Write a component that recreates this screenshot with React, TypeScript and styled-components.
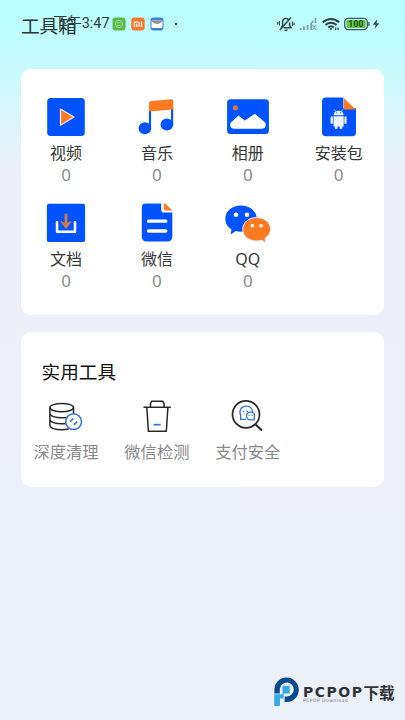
import React from 'react';
import styled, { createGlobalStyle } from 'styled-components';

const Global = createGlobalStyle`
  * { box-sizing: border-box; }
  body { margin: 0; font-family: "Noto Sans", "Noto Sans CJK SC", sans-serif; }
`;

const BLUE = '#0053ff';
const ORANGE = '#fc7a22';

const Screen = styled.main`
  position: relative;
  display: flex;
  flex-direction: column;
  width: 405px;
  height: 720px;
  overflow: hidden;
  background: linear-gradient(180deg, #b9fffe 0, #bbfefd 24px, #c9fbfc 66px, #eceff8 168px, #ecf0f8 100%);
`;

const Header = styled.header`
  position: relative;
  height: 69px;
  padding: 12px 0 0 21px;
`;

const PageTitle = styled.h1`
  margin: 0;
  font-size: 18.6px;
  line-height: 28px;
  font-weight: 400;
  color: #2a3536;
`;

const StatusBar = styled.div`
  position: absolute;
  left: 53px;
  right: 25px;
  top: 14px;
  height: 20px;
  display: flex;
  align-items: center;
  justify-content: space-between;
`;

const StatusGroup = styled.div<{ $gap: number }>`
  display: flex;
  align-items: center;
  gap: ${(p) => p.$gap}px;
`;

const Clock = styled.span`
  width: 60px;
  margin-right: -6px;
  font-family: "Roboto", "Noto Sans CJK SC", sans-serif;
  font-size: 14.4px;
  line-height: 20px;
  color: #2b3d3e;
  white-space: nowrap;
`;

const Dot = styled.i`
  width: 2px;
  height: 2px;
  margin-left: 6px;
  background: #344;
`;

const Card = styled.section<{ $height: number }>`
  width: 363.5px;
  height: ${(p) => p.$height}px;
  margin: 0 0 16.5px 20.6px;
  background: #fff;
  border-radius: 10px;
`;

const Grid = styled.div<{ $top?: number }>`
  display: grid;
  grid-template-columns: repeat(4, 1fr);
  grid-auto-rows: 106.5px;
  padding-top: ${(p) => p.$top ?? 0}px;
`;

const Cell = styled.div`
  display: flex;
  flex-direction: column;
  align-items: center;
  svg { display: block; flex: none; }
`;

const Label = styled.span<{ $muted?: boolean }>`
  margin-top: 2px;
  font-size: ${(p) => (p.$muted ? 16.3 : 16)}px;
  line-height: 22px;
  color: ${(p) => (p.$muted ? '#8a8a8a' : '#383838')};
  white-space: nowrap;
`;

const Count = styled.span`
  font-size: 17px;
  line-height: 22px;
  color: #8a8a8a;
`;

const SectionTitle = styled.h2`
  margin: 0;
  padding: 26px 0 0 21px;
  font-size: 18.6px;
  line-height: 28px;
  font-weight: 400;
  color: #111;
`;

const Watermark = styled.aside`
  position: absolute;
  left: 273px;
  top: 676px;
  display: flex;
  gap: 3px;
`;

const Brand = styled.div`
  display: flex;
  flex-direction: column;
  padding-top: 8px;
`;

const BrandName = styled.div`
  display: flex;
  align-items: center;
  height: 16px;
  color: #303236;
  font: 700 14px/16px "DejaVu Sans", sans-serif;
  letter-spacing: 1.5px;
  white-space: nowrap;
`;

const BrandCjk = styled.span`
  font: 700 15.6px/16px "Noto Sans CJK SC", sans-serif;
  letter-spacing: 0;
`;

const BrandSub = styled.span`
  margin-top: -2px;
  font: 400 4.6px/6px "DejaVu Sans", sans-serif;
  letter-spacing: 0.4px;
  color: #6b7078;
  white-space: nowrap;
`;

const Icon = ({ children }: { children: React.ReactNode }) => (
  <svg width="48" height="46" viewBox="0 0 48 46" fill="none">{children}</svg>
);

const VideoIcon = () => (
  <Icon>
    <rect x="5.2" y="4" width="37.6" height="38" rx="3.5" fill={BLUE} />
    <path d="M18.5 15v16.2L32 23.1z" fill={ORANGE} stroke="#e9ecff" strokeWidth="1.2" strokeLinejoin="round" />
  </Icon>
);

const MusicIcon = () => (
  <Icon>
    <ellipse cx="11.9" cy="34.2" rx="6.3" ry="6" fill={BLUE} />
    <ellipse cx="33.9" cy="30.6" rx="6.3" ry="6" fill={BLUE} />
    <path d="M17 17v17M39.1 14v17" stroke={BLUE} strokeWidth="2.2" />
    <path d="M16 17.6V9.100Q16 7.100 18.100 6.900L38.200 5.200Q40.300 5.100 40.300 7v8.600z" fill={ORANGE} />
  </Icon>
);

const AlbumIcon = () => (
  <Icon>
    <rect x="3.1" y="5.2" width="41.8" height="34.9" rx="3.5" fill={BLUE} />
    <circle cx="11.4" cy="13.8" r="2.6" fill="#d8783f" />
    <path d="M6.8 28.9l7.8-6.800 6.200 5 10.100-6.800 10.200 8.600v2.700q0 2.600-2.600 2.600H9.400q-2.600 0-2.600-2.600z" fill="#fff" stroke="#fff" strokeLinejoin="round" />
  </Icon>
);

const PackageIcon = () => (
  <Icon>
    <path d="M11 3.500h17.300v10.800H41v24a4 4 0 0 1-4 4H11a4 4 0 0 1-4-4V7.500a4 4 0 0 1 4-4z" fill={BLUE} />
    <path d="M28.600 3.700l12 11.900H30.500q-1.900 0-1.900-1.900z" fill={ORANGE} />
    <g fill="#eef4ff">
      <path d="M18.600 21.200q.2-4.500 5-4.500t5 4.500zM18.500 22.200h10.200v10.300H18.500z" />
      <rect x="15.600" y="22.300" width="2.200" height="7.800" rx="1.100" />
      <rect x="29.400" y="22.300" width="2.200" height="7.800" rx="1.100" />
      <rect x="19.900" y="30" width="2.600" height="5" rx="1" />
      <rect x="24.700" y="30" width="2.600" height="5" rx="1" />
    </g>
    <path d="M19.300 15.500l1.500 2m7-2l-1.500 2" stroke="#eef4ff" strokeWidth=".8" />
    <path d="M21.200 18.900h1m3 0h1" stroke={BLUE} />
  </Icon>
);

const DocumentIcon = () => (
  <Icon>
    <rect x="4.900" y="3.800" width="38.200" height="38.300" rx="2.200" fill={BLUE} />
    <path d="M15 22.300v9.500h18v-9.500" stroke="#fff" strokeWidth="2.500" strokeLinejoin="round" strokeLinecap="round" />
    <path d="M24 13.500v12" stroke="#d17b46" strokeWidth="2.800" />
    <path d="M18.900 21.600l5.100 6.800 5.100-6.800-5.100 2.200z" fill="#d17b46" stroke="#d17b46" strokeLinejoin="round" />
  </Icon>
);

const FileIcon = () => (
  <Icon>
    <path d="M12.500 3.600h15.700v6.200q0 2.800 2.800 2.800h8.300v24.500a4.500 4.500 0 0 1-4.500 4.500H13.300a4.500 4.500 0 0 1-4.500-4.500V7.600q0-4 3.700-4z" fill={BLUE} />
    <path d="M30.800 3.700h1.600l7 6.800H32.500q-1.700 0-1.700-1.700z" fill={ORANGE} />
    <path d="M15.500 21.200h17.300M15.500 31h17.300" stroke="#fff" strokeWidth="3.300" strokeLinecap="round" />
  </Icon>
);

const ChatIcon = () => (
  <Icon>
    <path d="M17 5.400C8 5.400 1.300 10.900 1.300 18.700c0 4.600 2.300 8.200 6.200 10.600l-.8 5.100 5-3.300c1.600.4 3.300.6 5.300.6 9 0 15.700-5.500 15.700-13S26 5.400 17 5.400z" fill={BLUE} />
    <path d="M32.600 17.600c-8 0-13.900 5-13.900 11.700S24.600 41 32.600 41c1.800 0 3.600-.2 5.100-.7l4.200 2.500-.9-4.500c3.500-2.100 5.600-5.300 5.600-9 0-6.700-6-11.700-14-11.700z" fill={ORANGE} stroke="#eef" strokeWidth="1" />
    <g fill="#fff"><circle cx="12" cy="14.800" r="2.300" /><circle cx="23" cy="14.800" r="2.300" /><circle cx="28.300" cy="25.700" r="1.800" /><circle cx="37.100" cy="25.700" r="1.800" /></g>
  </Icon>
);

const ToolIcon = ({ children }: { children: React.ReactNode }) => (
  <svg width="48" height="40" viewBox="0 0 48 40" fill="none" stroke="#282828" strokeWidth="1.500">{children}</svg>
);

const CleanIcon = () => (
  <ToolIcon>
    <ellipse cx="19.700" cy="8.600" rx="11.800" ry="4.200" />
    <path d="M7.900 8.600v18c0 2.400 5.300 4.200 11.800 4.200 3 0 5-.3 7-.8M31.500 8.600v7.400M7.900 14.600c0 2.400 5.300 4.200 11.800 4.200 4 0 8-.4 10.500-1.700M7.900 20.600c0 2.400 5.300 4.200 11.800 4.200h4" />
    <g stroke="#3472df"><circle cx="31.600" cy="22.700" r="7.900" fill="#fff" /><path d="M28.100 22.700l3.200-3.200m.6 6.400l3.200-3.200" strokeWidth="1.700" /></g>
  </ToolIcon>
);

const TrashIcon = () => (
  <ToolIcon>
    <path d="M10.400 8.200h27.400M17.500 8V4.500l1.200-2.200h11l1.400 2.200V8M13.800 8.500l1.600 23.700h17.900l1.600-23.700" />
    <path d="M20.500 25.700h7.200" stroke="#3472df" strokeWidth="1.700" />
  </ToolIcon>
);

const SecureIcon = () => (
  <ToolIcon>
    <circle cx="22" cy="15.400" r="13.500" strokeWidth="1.700" />
    <path d="M31.600 25.500l6.400 5.900" strokeWidth="2" />
    <g stroke="#3472df" strokeWidth="1.300">
      <path d="M22 20.400h-5.300v-4c-2.200-4.600.6-9.300 5.400-9.300 3.700 0 6.300 2.400 6.600 6" />
      <path d="M30.200 20.900h-3.500c-5.600 0-5.500-7.800.1-7.800 3 0 4.400 2.400 3.400 4.700z" />
      <path d="M18.700 12.500h1.400m2.400 0h1.400M24.600 16.300h1.100m1.900 0h1.100" />
    </g>
  </ToolIcon>
);

const ShieldAppIcon = () => (
  <svg width="14" height="14" viewBox="0 0 14 14" fill="none">
    <rect x=".5" y=".5" width="13" height="13" rx="3" fill="#55b947" />
    <circle cx="7" cy="7" r="3.700" stroke="#a1df8f" />
    <path d="M4.700 5.800h4.600M5 8q2 1.600 4 0" stroke="#a1df8f" strokeWidth=".8" />
  </svg>
);

const MiIcon = () => (
  <svg width="14" height="14" viewBox="0 0 14 14" fill="none">
    <rect x=".3" y=".5" width="13.400" height="13" rx="3" fill="#f8792d" />
    <path d="M3.500 9.900V5h2.900q1.700 0 1.700 1.800v3.100M5.800 6.800v3.100M10.500 4.500v5.400" stroke="#fff" strokeWidth="1.200" />
  </svg>
);

const MailIcon = () => (
  <svg width="14" height="14" viewBox="0 0 14 14" fill="none">
    <rect x=".5" y=".5" width="13" height="13" rx="3" fill="#437edb" />
    <rect x="1.500" y="3.400" width="11" height="7.700" rx="1" fill="#fafdff" />
    <path d="M2 3.500h10v1.200L9 6.700H5L2 4.700z" fill="#978f8b" />
  </svg>
);

const MutedIcon = () => (
  <svg width="18" height="16" viewBox="0 0 18 16" fill="none" stroke="#34484b" strokeWidth="1.500">
    <path d="M4.200 11.800l1.400-2.300V6.600c0-2.300 1.400-4 3.400-4 1 0 2 .4 2.600 1.100M12.600 6.500v3l1.500 2.300H6.500M7.500 14.300h3M2.800 14L14 1.500" />
    <path d="M2.400 5v4.500M.7 6v2.500M15.400 5.500v4.500M17 6.500V9" strokeWidth="1.100" />
  </svg>
);

const SignalIcon = () => (
  <svg width="18" height="14" viewBox="0 0 18 14" fill="none" stroke="#81a1a6" strokeWidth="1.800">
    <path d="M1.500 13v-2M5 13V9.500M8.600 13V8M12.200 13V5.500M16.500 1v5M13.500 3.500v2.500" />
    <path d="M13.500 8l3.500 5m0-5l-3.500 5" strokeWidth="1.200" />
  </svg>
);

const WifiIcon = () => (
  <svg width="18" height="14" viewBox="0 0 18 14" fill="none" stroke="#2c3d40" strokeWidth="1.900">
    <path d="M.9 5.300C5.500.8 12.500.8 17.100 5.300M3.500 8c3.200-3.100 7.800-3.100 11 0M6.200 10.500c1.600-1.500 4-1.500 5.600 0" />
    <circle cx="8.800" cy="12" r="1" fill="#2c3d40" stroke="none" />
    <path d="M13.700 13v-2.500M16 10.500v2.500" strokeWidth="1.200" />
  </svg>
);

const BatteryBox = styled.div`
  position: relative;
  display: flex;
  width: 36px;
  height: 14px;
`;

const BatteryLevel = styled.span`
  position: absolute;
  left: 0;
  top: 0;
  width: 24px;
  font: 700 8.5px/14px "Roboto", sans-serif;
  letter-spacing: 0.3px;
  text-align: center;
  color: #174817;
`;

const Battery = () => (
  <BatteryBox>
    <svg width="36" height="14" viewBox="0 0 36 14" fill="none">
      <rect x=".7" y="1.300" width="22.600" height="11.400" rx="3.600" stroke="#42595a" strokeWidth="1.300" />
      <rect x="2.400" y="3" width="19.200" height="8" rx="1.800" fill="#65c648" />
      <path d="M24.900 5v4" stroke="#42595a" strokeWidth="1.300" />
      <path d="M33.300 2l-4.500 5.700h3L30.500 12l4.700-5.700h-2.900z" fill="#2f3f42" />
    </svg>
    <BatteryLevel>100</BatteryLevel>
  </BatteryBox>
);

const BrandMark = () => (
  <svg width="27" height="31" viewBox="0 0 27 31" fill="none">
    <path d="M1.400 17.500V13.200A12.200 12.200 0 1 1 13.600 26h-2v-5.500h2A7 7 0 1 0 6.800 13.200v4.300z" fill="#074b8d" />
    <path d="M9.500 9.800h7.200v7.700h-6v5H7V30H1.200V18.200h8.300z" fill="#39a8e9" />
  </svg>
);

const files = [
  { label: '视频', icon: <VideoIcon /> },
  { label: '音乐', icon: <MusicIcon /> },
  { label: '相册', icon: <AlbumIcon /> },
  { label: '安装包', icon: <PackageIcon /> },
  { label: '文档', icon: <DocumentIcon /> },
  { label: '微信', icon: <FileIcon /> },
  { label: 'QQ', icon: <ChatIcon /> },
];

const tools = [
  { label: '深度清理', icon: <CleanIcon /> },
  { label: '微信检测', icon: <TrashIcon /> },
  { label: '支付安全', icon: <SecureIcon /> },
];

export default function App() {
  return (
    <Screen>
      <Global />
      <Header>
        <PageTitle>工具箱</PageTitle>
        <StatusBar>
          <StatusGroup $gap={5}>
            <Clock>下午3:47</Clock>
            <ShieldAppIcon />
            <MiIcon />
            <MailIcon />
            <Dot />
          </StatusGroup>
          <StatusGroup $gap={4.5}>
            <MutedIcon />
            <SignalIcon />
            <WifiIcon />
            <Battery />
          </StatusGroup>
        </StatusBar>
      </Header>
      <Card $height={246}>
        <Grid $top={24.5}>
          {files.map((f) => (
            <Cell key={f.label}>
              {f.icon}
              <Label>{f.label}</Label>
              <Count>0</Count>
            </Cell>
          ))}
        </Grid>
      </Card>
      <Card $height={155.5}>
        <SectionTitle>实用工具</SectionTitle>
        <Grid $top={13.5}>
          {tools.map((t) => (
            <Cell key={t.label}>
              {t.icon}
              <Label $muted>{t.label}</Label>
            </Cell>
          ))}
        </Grid>
      </Card>
      <Watermark>
        <BrandMark />
        <Brand>
          <BrandName>PCPOP<BrandCjk>下载</BrandCjk></BrandName>
          <BrandSub>PCPOP Download</BrandSub>
        </Brand>
      </Watermark>
    </Screen>
  );
}
